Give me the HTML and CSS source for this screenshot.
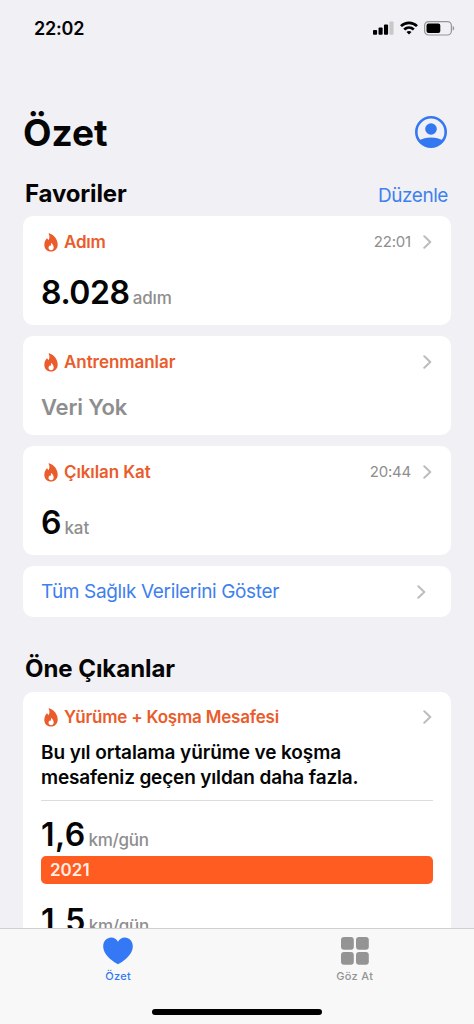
FILE: index.html
```
<!DOCTYPE html>
<html lang="tr">
<head>
<meta charset="utf-8">
<title>Özet</title>
<link rel="stylesheet" href="styles.css">
</head>
<body>
<svg class="defs" width="0" height="0" aria-hidden="true">
  <symbol id="flame" viewBox="0 0 14 19">
    <path fill-rule="evenodd" d="M5.100.3C9.600 1.600 13.700 6.200 13.700 11.500C13.700 15.800 10.900 18.500 7 18.500C3.100 18.500.3 15.800.3 12C.3 9.300 1.400 7.200 2.700 5.600C3 5.200 3.500 5.400 3.600 5.800L4.200 7.200C5.700 5.500 5.900 3.300 4.700.9C4.500.5 4.700.2 5.100.3ZM7.100 17.200C8.700 17.200 9.700 16.100 9.700 14.500C9.700 12.500 8.600 11 7.500 10.200C7.200 10 6.900 10.200 7 10.600C7.100 11.700 6.800 12.400 6.300 13L5.700 12.500C5 13.200 4.500 13.900 4.500 14.800C4.500 16.200 5.600 17.200 7.100 17.200Z"/>
  </symbol>
  <symbol id="chevron" viewBox="0 0 9 14">
    <path d="M1.300 1.200L7.300 7L1.300 12.800" fill="none" stroke="currentColor" stroke-width="2" stroke-linecap="round" stroke-linejoin="round"/>
  </symbol>
</svg>
<div class="screen">
  <header class="status">
    <span class="clock">22:02</span>
    <span class="indicators">
      <svg width="21" height="14" viewBox="0 0 22 14" preserveAspectRatio="none"><rect x="0" y="9" width="4.300" height="4.700" rx="1"/><rect x="5.800" y="6.500" width="4.300" height="7.200" rx="1"/><rect x="11.500" y="3.500" width="4.300" height="10.200" rx="1"/><rect x="17.200" y="0.500" width="4.300" height="13.200" rx="1" fill="#c8c8cb"/></svg>
      <svg width="18" height="14" viewBox="0 0 18 14" fill="none" stroke="#000" stroke-width="2.700"><path d="M1 5.100C5.500.7 12.500.7 17 5.100"/><path d="M4.200 8.500C7 5.900 11 5.900 13.800 8.500"/><path d="M9 13.500L6.500 11C8 9.700 10 9.700 11.500 11Z" fill="#000" stroke="none"/></svg>
      <svg width="31" height="15" viewBox="0 0 31 15"><rect x=".6" y=".6" width="26.800" height="13.400" rx="4" fill="none" stroke="#969699" stroke-width="1.200"/><rect x="2.500" y="2.500" width="13.800" height="9.600" rx="2"/><path d="M28.700 5C30.700 5.600 30.700 9 28.700 9.600Z" fill="#969699"/></svg>
    </span>
  </header>
  <main class="content">
    <div class="title-row">
      <h1>Özet</h1>
      <svg width="32" height="32" viewBox="0 0 32 32"><circle cx="16" cy="16" r="14.700" fill="none" stroke="#3478f1" stroke-width="2.600"/><circle cx="16" cy="13" r="5.800" fill="#3478f1"/><path d="M4.500 24.800C9.500 20.400 22.500 20.400 27.500 24.800C24.500 29.200 20.500 31.200 16 31.200S7.500 29.200 4.500 24.800Z" fill="#3478f1"/></svg>
    </div>
    <div class="section-row"><h2 class="favorites">Favoriler</h2><a class="edit">Düzenle</a></div>
    <section class="card tall">
      <div class="head"><svg class="flame"><use href="#flame"/></svg><span class="name steps">Adım</span><span class="time">22:01</span><svg class="chevron"><use href="#chevron"/></svg></div>
      <div class="value"><b class="total">8.028</b><span class="unit">adım</span></div>
    </section>
    <section class="card short">
      <div class="head"><svg class="flame"><use href="#flame"/></svg><span class="name workouts">Antrenmanlar</span><svg class="chevron"><use href="#chevron"/></svg></div>
      <div class="empty">Veri Yok</div>
    </section>
    <section class="card tall">
      <div class="head"><svg class="flame"><use href="#flame"/></svg><span class="name climbed">Çıkılan Kat</span><span class="time">20:44</span><svg class="chevron"><use href="#chevron"/></svg></div>
      <div class="value"><b>6</b><span class="unit">kat</span></div>
    </section>
    <section class="card all"><a>Tüm Sağlık Verilerini Göster</a><svg class="chevron"><use href="#chevron"/></svg></section>
    <h2 class="highlights">Öne Çıkanlar</h2>
    <section class="card trend">
      <div class="head"><svg class="flame"><use href="#flame"/></svg><span class="name">Yürüme + Koşma Mesafesi</span><svg class="chevron"><use href="#chevron"/></svg></div>
      <p><span class="line-a">Bu yıl ortalama yürüme ve koşma</span><br><span class="line-b">mesafeniz geçen yıldan daha fazla.</span></p>
      <div class="value rate"><b>1,6</b><span class="unit">km/gün</span></div>
      <div class="bar">2021</div>
      <div class="value rate second"><b>1,5</b><span class="unit">km/gün</span></div>
    </section>
  </main>
  <nav class="tabs">
    <div class="tab-row">
      <div class="tab active"><svg width="30" height="28" viewBox="0 0 30 28"><path d="M15 27.200C14.200 27.200 11.900 25.700 9.200 23.600C3.600 19.200.2 14.500.2 9.300C.2 4.100 3.700.4 8.200.4C11.300.4 13.700 2.100 15 4.700C16.300 2.100 18.700.4 21.800.4C26.300.4 29.800 4.100 29.800 9.300C29.800 14.500 26.400 19.200 20.800 23.600C18.100 25.700 15.800 27.200 15 27.200Z"/></svg><span>Özet</span></div>
      <div class="tab"><svg width="28" height="28" viewBox="0 0 28 28"><rect width="12.800" height="12.800" rx="3"/><rect x="15" width="12.800" height="12.800" rx="3"/><rect y="15" width="12.800" height="12.800" rx="3"/><rect x="15" y="15" width="12.800" height="12.800" rx="3"/></svg><span>Göz At</span></div>
    </div>
    <div class="home"></div>
  </nav>
</div>
</body>
</html>
```

FILE: styles.css
```
* { box-sizing: border-box; }
body { margin: 0; background: #f1f0f5; font-family: Inter, "Noto Sans", sans-serif; color: #050505; }
svg { display: block; flex: none; }
h1, h2, p { margin: 0; }
.defs { position: absolute; }
.screen { width: 474px; height: 1024px; display: flex; flex-direction: column; overflow: hidden; }
.status { height: 56px; flex: none; display: flex; justify-content: space-between; padding: 18px 19px 0 34px; }
.clock { font-size: 18px; line-height: 21px; font-weight: 600; letter-spacing: -.2px; }
.indicators { display: flex; gap: 6px; padding-top: 3px; }
.content { height: 872px; flex: none; overflow: hidden; padding: 56px 23px 0; }
.title-row { height: 42px; display: flex; justify-content: space-between; padding: 4px 4px 0 0; }
h1 { font-size: 37px; line-height: 34px; letter-spacing: 0; font-weight: 700; }
.section-row { height: 62px; display: flex; justify-content: space-between; padding: 24px 3px 0 2px; }
h2 { font-size: 24px; line-height: 32px; font-weight: 700; letter-spacing: -.05px; }
.favorites { letter-spacing: -.15px; }
.edit { font-size: 19px; line-height: 36px; color: #3e80ee; letter-spacing: -.45px; }
.card { background: #fff; border-radius: 10px; padding: 15px 18px 0; margin-bottom: 11px; }
.tall { height: 109px; }
.short { height: 99px; }
.head { height: 22px; display: flex; align-items: center; }
.flame { width: 14px; height: 19px; margin: 0 6px 0 3px; fill: #ea5c2b; }
.name { font-size: 17px; line-height: 22px; font-weight: 600; color: #ea5c2b; letter-spacing: -.2px; white-space: nowrap; }
.workouts { letter-spacing: -.05px; }
.climbed { letter-spacing: -.1px; }
.time { margin-left: auto; color: #8e8e8e; font-size: 15px; line-height: 22px; letter-spacing: -.2px; }
.chevron { width: 9px; height: 14px; color: #bdbdc0; margin-left: auto; margin-right: 1px; }
.time + .chevron { margin-left: 12px; }
.value { display: flex; align-items: baseline; gap: 4px; margin-top: 20px; line-height: 40px; }
.value b { font-size: 32px; font-weight: 600; }
.value .total { letter-spacing: -.4px; }
.unit { color: #8e8e8e; font-size: 17px; font-weight: 500; letter-spacing: -.1px; margin-left: -1px; }
.empty { color: #8e8e8e; font-size: 22px; line-height: 30px; font-weight: 600; margin-top: 19px; letter-spacing: -.15px; }
.all { height: 51px; padding: 0 24px 0 18px; display: flex; align-items: center; color: #3e80ee; font-size: 19px; letter-spacing: -.36px; }
.highlights { padding: 25px 2px 0; height: 64px; }
.trend { height: 300px; padding-top: 14px; }
.trend p { font-size: 19px; line-height: 25px; font-weight: 600; margin-top: 12px; padding-bottom: 10px; border-bottom: 1px solid #dcdcdf; white-space: nowrap; }
.line-a { letter-spacing: -.1px; }
.line-b { letter-spacing: -.16px; }
.rate { margin-top: 14px; }
.rate b { letter-spacing: .4px; }
.rate .unit { letter-spacing: -.3px; }
.bar { height: 28px; margin-top: -4px; padding-left: 9px; border-radius: 5px; background: #ff5c22; color: #ffeee3; font-size: 17px; font-weight: 600; line-height: 28px; }
.second { margin-top: 17px; }
.tabs { height: 96px; flex: none; background: #f8f8f8; border-top: 1px solid #d0d0d2; }
.tab-row { display: flex; height: 80px; padding-right: 1px; }
.tab { width: 50%; display: flex; flex-direction: column; align-items: center; gap: 4px; padding-top: 8px; fill: #949494; color: #949494; font-size: 11px; line-height: 14px; font-weight: 500; letter-spacing: .3px; }
.active { fill: #3478f6; color: #3478f6; }
.home { width: 170px; height: 6px; border-radius: 3px; background: #000; margin: 0 auto; }
```
